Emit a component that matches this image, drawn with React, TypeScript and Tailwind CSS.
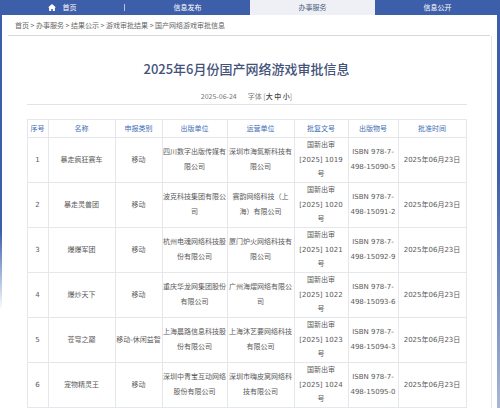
import React from "react";

const rows = [
  {
    no: "1",
    name: "暴走疯狂赛车",
    type: "移动",
    pub: ["四川数字出版传媒有", "限公司"],
    op: ["深圳市海氮斯科技有", "限公司"],
    doc: "1019",
    isbn: "15090-5",
  },
  {
    no: "2",
    name: "暴走灵兽团",
    type: "移动",
    pub: ["波克科技集团有限公", "司"],
    op: ["赛韵网络科技（上", "海）有限公司"],
    doc: "1020",
    isbn: "15091-2",
  },
  {
    no: "3",
    name: "爆爆军团",
    type: "移动",
    pub: ["杭州电魂网络科技股", "份有限公司"],
    op: ["厦门炉火网络科技有", "限公司"],
    doc: "1021",
    isbn: "15092-9",
  },
  {
    no: "4",
    name: "爆炒天下",
    type: "移动",
    pub: ["重庆华龙网集团股份", "有限公司"],
    op: ["广州海熠网络有限公", "司"],
    doc: "1022",
    isbn: "15093-6",
  },
  {
    no: "5",
    name: "苍穹之巅",
    type: "移动-休闲益智",
    pub: ["上海晨路信息科技股", "份有限公司"],
    op: ["上海沐艺要网络科技", "有限公司"],
    doc: "1023",
    isbn: "15094-3",
  },
  {
    no: "6",
    name: "宠物精灵王",
    type: "移动",
    pub: ["深圳中青宝互动网络", "股份有限公司"],
    op: ["深圳市嗨皮窝网络科", "技有限公司"],
    doc: "1024",
    isbn: "15095-0",
  },
];

const headers = ["序号", "名称", "申报类别", "出版单位", "运营单位", "批复文号", "出版物号", "批准时间"];
const widths = [21, 67, 47, 65, 67, 54, 50, 68];

function Lines({ lines }: { lines: string[] }) {
  return (
    <>
      {lines.map((l, i) => (
        <div key={i} className="whitespace-nowrap">
          {l}
        </div>
      ))}
    </>
  );
}

export default function App() {
  return (
    <div className="w-[500px] h-[408px] overflow-hidden flex flex-col bg-white font-['DejaVu_Sans','Noto_Sans_CJK_SC',sans-serif]">
      {/* top nav */}
      <div className="h-[15px] shrink-0 grid grid-cols-4 bg-[#3d5ea9] text-[7px] text-white font-['Noto_Sans_CJK_SC',sans-serif]">
        <div className="flex items-center">
          <div className="flex-1 flex items-center justify-center gap-[7px]">
            <svg width="8" height="7" viewBox="0 0 8 7" fill="#ffffff">
              <path d="M4 0 L8 3.6 L6.9 3.6 L6.9 7 L4.8 7 L4.8 5 L3.2 5 L3.2 7 L1.1 7 L1.1 3.6 L0 3.6 Z" />
            </svg>
            <span>首页</span>
          </div>
          <span className="w-px h-[7px] bg-[#b7c3e2]" />
        </div>
        <div className="flex items-center justify-center">信息发布</div>
        <div className="flex items-center justify-center bg-[#eef0f5] text-[#4a5a80]">办事服务</div>
        <div className="flex items-center justify-center">信息公开</div>
      </div>

      <div className="flex-1 flex">
        <div className="w-[2px] bg-linear-to-b from-[#3d5ea9] from-55% to-white to-75%" />
        <div className="flex-1 flex flex-col bg-white">
          {/* breadcrumb */}
          <div className="h-[21px] ml-[6px] mr-[7px] flex items-center pl-[7px] border-b border-[#d6d8dc] text-[7px] text-[#666] font-['Noto_Sans_CJK_SC',sans-serif]">
            首页 &gt; 办事服务 &gt; 结果公示 &gt; 游戏审批结果 &gt; 国产网络游戏审批信息
          </div>

          <div className="flex-1 mr-[5px] border-r border-[#e4e6ea] flex flex-col items-center">
            <h1 className="mt-[24px] text-[13px] leading-[18px] font-medium text-[#44527a] font-['Noto_Sans_CJK_SC',sans-serif]">
              2025年6月份国产网络游戏审批信息
            </h1>
            <div className="mt-[13px] flex gap-[11px] text-[7px] leading-[10px] text-[#777] font-['Noto_Sans_CJK_SC',sans-serif]">
              <span>2025-06-24</span>
              <span>
                字体 [<span className="text-[#444] font-medium">大 中 小</span>]
              </span>
            </div>
            <div className="mt-[3px] w-[440px] border-b border-[#e2e3e6]" />

            <table className="mt-[14px] w-[439px] table-fixed border-collapse text-[7px] text-[#5a5a5a] text-center">
              <colgroup>
                {widths.map((w, i) => (
                  <col key={i} style={{ width: w }} />
                ))}
              </colgroup>
              <thead>
                <tr className="h-[18px]">
                  {headers.map((h) => (
                    <th
                      key={h}
                      className="border border-[#e6e7ea] p-0 font-normal text-[#3f6db5] font-['Noto_Sans_CJK_SC',sans-serif]"
                    >
                      {h}
                    </th>
                  ))}
                </tr>
              </thead>
              <tbody className="leading-[14.6px]">
                {rows.map((r) => (
                  <tr key={r.no} className="h-[45px]">
                    <td className="border border-[#e6e7ea] p-0">{r.no}</td>
                    <td className="border border-[#e6e7ea] p-0">{r.name}</td>
                    <td className="border border-[#e6e7ea] p-0 whitespace-nowrap">{r.type}</td>
                    <td className="border border-[#e6e7ea] p-0 leading-[15.5px]">
                      <Lines lines={r.pub} />
                    </td>
                    <td className="border border-[#e6e7ea] p-0 leading-[15.5px]">
                      <Lines lines={r.op} />
                    </td>
                    <td className="border border-[#e6e7ea] p-0">
                      <Lines lines={["国新出审", `[2025] ${r.doc}`, "号"]} />
                    </td>
                    <td className="border border-[#e6e7ea] p-0">
                      <Lines lines={["ISBN 978-7-", `498-${r.isbn}`]} />
                    </td>
                    <td className="border border-[#e6e7ea] p-0 whitespace-nowrap">2025年06月23日</td>
                  </tr>
                ))}
              </tbody>
            </table>
          </div>
        </div>
        <div className="w-[3px] bg-linear-to-b from-[#3d5ea9] from-40% to-[#a9b6d6]" />
      </div>
    </div>
  );
}
